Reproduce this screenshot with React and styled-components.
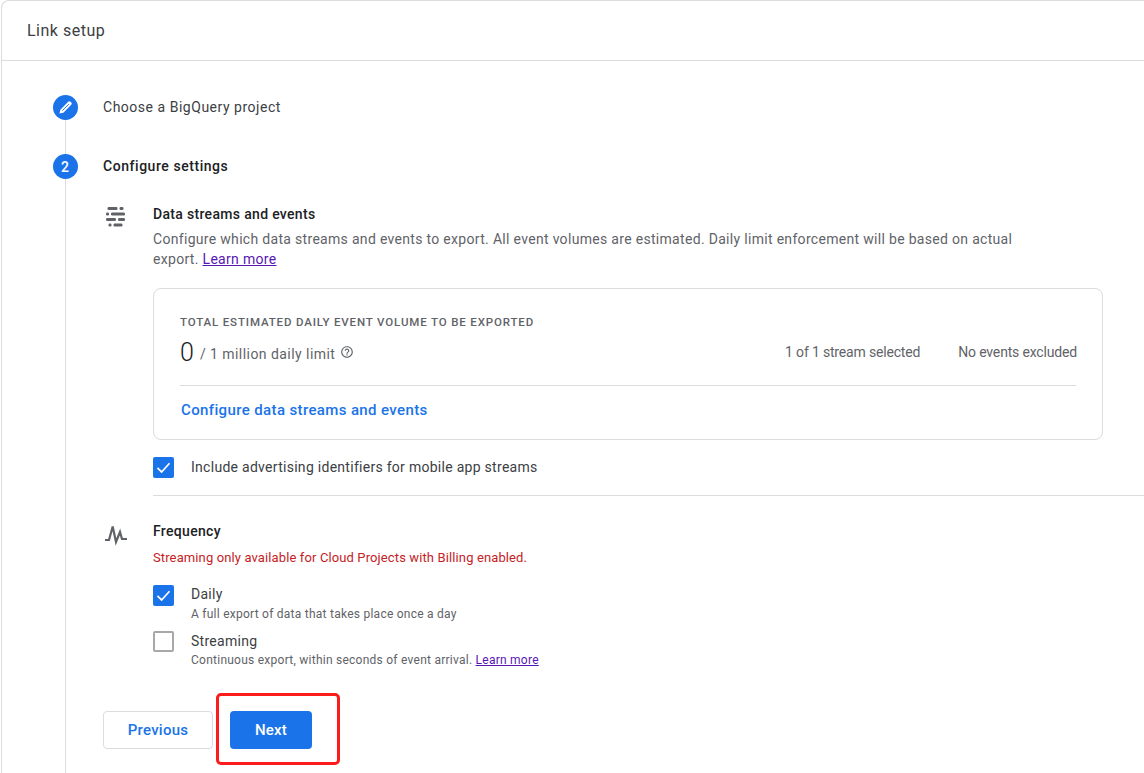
import React from "react";
import styled, { createGlobalStyle } from "styled-components";

const GlobalStyle = createGlobalStyle`
  html, body {
    margin: 0;
    padding: 0;
    background: #fff;
  }
  body {
    font-family: Roboto, "Liberation Sans", sans-serif;
    color: #202124;
  }
  * {
    box-sizing: border-box;
  }
`;

const Page = styled.div`
  position: relative;
  width: 1144px;
  height: 773px;
  overflow: hidden;
  background: #fff;
`;

const Panel = styled.div`
  height: 800px;
  margin-left: 1px;
  border: 1px solid #dadce0;
  border-right: 0;
  border-bottom: 0;
  border-top-left-radius: 8px;
`;

const Header = styled.div`
  height: 60px;
  padding-left: 25px;
  display: flex;
  align-items: center;
  border-bottom: 1px solid #dadce0;
  font-size: 16px;
  letter-spacing: 0.5px;
  color: #3c4043;
`;

const Body = styled.div`
  padding: 34px 0 0 51px;
`;

const Step = styled.div`
  display: flex;
  gap: 25px;
  height: ${(p) => p.$height}px;
`;

const Rail = styled.div`
  width: 25px;
  flex: none;
  display: flex;
  flex-direction: column;
  align-items: center;
`;

const Circle = styled.div`
  width: 25px;
  height: 25px;
  flex: none;
  padding-right: 1px;
  border-radius: 50%;
  background: #1a73e8;
  color: #fff;
  font-size: 14px;
  font-weight: 500;
  display: flex;
  align-items: center;
  justify-content: center;
`;

const Connector = styled.div`
  flex: 1;
  width: 1px;
  background: #dadce0;
`;

const StepBody = styled.div`
  flex: 1;
  min-width: 0;
`;

const StepTitle = styled.div`
  height: 25px;
  line-height: 24px;
  font-size: 14px;
  letter-spacing: ${(p) => (p.$active ? 0.55 : 0.52)}px;
  font-weight: ${(p) => (p.$active ? 500 : 400)};
  color: ${(p) => (p.$active ? "#202124" : "#3c4043")};
`;

const Section = styled.div`
  display: flex;
  margin-top: ${(p) => p.$top}px;
`;

const SectionIcon = styled.div`
  width: 50px;
  flex: none;
  padding: 2px 0 0 2px;
  color: #5f6368;
  svg {
    display: block;
  }
`;

const SectionMain = styled.div`
  flex: 1;
  min-width: 0;
`;

const SectionTitle = styled.div`
  font-size: 14px;
  line-height: 20px;
  font-weight: 500;
  letter-spacing: 0.32px;
`;

const Description = styled.div`
  margin-top: 5px;
`;

const DescriptionLine = styled.div`
  font-size: 14px;
  line-height: 20px;
  letter-spacing: 0.31px;
  color: #5f6368;
`;

const TextLink = styled.a`
  color: #5717b5;
  text-decoration: underline;
`;

const Card = styled.div`
  width: 950px;
  height: 152px;
  margin-top: 19px;
  padding: 24px 26px 0;
  border: 1px solid #dadce0;
  border-radius: 8px;
`;

const CardLabel = styled.div`
  font-size: 11.5px;
  line-height: 18px;
  font-weight: 500;
  letter-spacing: 0.85px;
  color: #5f6368;
`;

const VolumeRow = styled.div`
  height: 34px;
  margin: 4px -1px 0 0;
  display: flex;
  align-items: center;
  color: #5f6368;
  font-size: 14px;
  letter-spacing: 0.45px;
`;

const VolumeCount = styled.span`
  font-size: 25px;
  font-weight: 300;
  color: #202124;
  letter-spacing: 0;
  margin-right: 6px;
`;

const VolumeLimit = styled.span`
  margin-top: 3px;
  margin-right: 5px;
`;

const HelpIcon = styled.svg`
  width: 14px;
  height: 14px;
  fill: #5f6368;
  margin-top: -1px;
`;

const Stat = styled.span`
  font-size: 14px;
  letter-spacing: -0.17px;
  margin-left: ${(p) => p.$gap || 0}px;
`;

const Spacer = styled.div`
  flex: 1;
`;

const CardDivider = styled.div`
  height: 1px;
  margin-top: 16px;
  background: #dadce0;
`;

const ActionLink = styled.a`
  display: block;
  margin: 14px 0 0 1px;
  font-size: 15px;
  line-height: 20px;
  font-weight: 500;
  letter-spacing: 0.37px;
  color: #1a73e8;
`;

const CheckRow = styled.div`
  display: flex;
  gap: 17px;
  margin-top: ${(p) => p.$top}px;
`;

const Box = styled.div`
  width: 21px;
  height: 21px;
  flex: none;
  border-radius: 2px;
  display: flex;
  align-items: center;
  justify-content: center;
  background: ${(p) => (p.$checked ? "#1a73e8" : "#fff")};
  border: ${(p) => (p.$checked ? "0" : "2px solid #a8a8a8")};
`;

const CheckText = styled.div`
  margin-top: ${(p) => p.$lift || 0}px;
`;

const CheckLabel = styled.div`
  font-size: 14px;
  line-height: 20px;
  letter-spacing: 0.28px;
  color: #3c4043;
`;

const CheckHint = styled.div`
  font-size: 12px;
  line-height: 17px;
  margin-top: ${(p) => p.$gap}px;
  letter-spacing: 0.25px;
  color: #5f6368;
`;

const SectionDivider = styled.div`
  height: 1px;
  margin-top: 17px;
  background: #dadce0;
`;

const ErrorText = styled.div`
  margin-top: 7px;
  font-size: 13px;
  line-height: 20px;
  letter-spacing: 0.12px;
  color: #c5221f;
`;

const Actions = styled.div`
  display: flex;
  gap: 17px;
  margin-top: 42px;
`;

const Button = styled.button`
  height: 38px;
  width: ${(p) => p.$width}px;
  border-radius: 4px;
  font-family: inherit;
  font-size: 15px;
  font-weight: 500;
  letter-spacing: 0.25px;
  padding: 0;
  background: ${(p) => (p.$primary ? "#1a73e8" : "#fff")};
  color: ${(p) => (p.$primary ? "#fff" : "#1a73e8")};
  border: ${(p) => (p.$primary ? "0" : "1px solid #dadce0")};
`;

const Highlight = styled.div`
  position: absolute;
  left: 216px;
  top: 693px;
  width: 124px;
  height: 72px;
  border: 3px solid #fb1c1c;
  border-radius: 5px;
  pointer-events: none;
`;

const Check = () => (
  <svg width="17" height="17" viewBox="0 0 24 24" fill="none" stroke="#fff" strokeWidth="2.4">
    <path d="M3.5 12.5l5.8 5.8L20.5 6" />
  </svg>
);

const PencilIcon = () => (
  <svg width="17" height="17" viewBox="0 0 24 24">
    <path fill="#fff" d="M3.5 20.5l1.2-5.5L15.8 3.9a2.4 2.4 0 0 1 3.4 0l.9.9a2.4 2.4 0 0 1 0 3.4L9 19.3z" />
    <path stroke="#1a73e8" strokeWidth="1.3" fill="none" d="M7.5 16.5L16.8 7.2" />
  </svg>
);

const StreamsIcon = () => (
  <svg width="22" height="22" viewBox="0 0 22 22" fill="currentColor">
    <rect x="2.5" y="1" width="10" height="3" rx="1.2" />
    <rect x="14.5" y="1" width="4" height="3" rx="1.2" />
    <rect x="1" y="6.5" width="3" height="3" rx="1.2" />
    <rect x="6" y="6.5" width="14" height="3" rx="1.2" />
    <rect x="1" y="12" width="10" height="3" rx="1.2" />
    <rect x="13" y="12" width="7" height="3" rx="1.2" />
    <rect x="3.5" y="17.5" width="3" height="3" rx="1.2" />
    <rect x="8.5" y="17.5" width="9" height="3" rx="1.2" />
  </svg>
);

const PulseIcon = () => (
  <svg width="24" height="24" viewBox="0 0 24 24" fill="none" stroke="currentColor" strokeWidth="2.2">
    <path d="M0 17h4L7.7 3.5 11 19l4-10 2 7h5" />
  </svg>
);

export default function App() {
  return (
    <Page>
      <GlobalStyle />
      <Panel>
        <Header>Link setup</Header>
        <Body>
          <Step $height={59}>
            <Rail>
              <Circle>
                <PencilIcon />
              </Circle>
              <Connector />
            </Rail>
            <StepBody>
              <StepTitle>Choose a BigQuery project</StepTitle>
            </StepBody>
          </Step>
          <Step $height={700}>
            <Rail>
              <Circle>2</Circle>
              <Connector />
            </Rail>
            <StepBody>
              <StepTitle $active>Configure settings</StepTitle>
              <Section $top={25}>
                <SectionIcon>
                  <StreamsIcon />
                </SectionIcon>
                <SectionMain>
                  <SectionTitle>Data streams and events</SectionTitle>
                  <Description>
                    <DescriptionLine>
                      Configure which data streams and events to export. All event volumes are estimated. Daily limit
                      enforcement will be based on actual
                    </DescriptionLine>
                    <DescriptionLine>
                      export. <TextLink>Learn more</TextLink>
                    </DescriptionLine>
                  </Description>
                  <Card>
                    <CardLabel>TOTAL ESTIMATED DAILY EVENT VOLUME TO BE EXPORTED</CardLabel>
                    <VolumeRow>
                      <VolumeCount>0</VolumeCount>
                      <VolumeLimit>/ 1 million daily limit</VolumeLimit>
                      <HelpIcon viewBox="0 0 24 24">
                        <path d="M11 18h2v-2h-2v2zm1-16C6.48 2 2 6.48 2 12s4.48 10 10 10 10-4.48 10-10S17.52 2 12 2zm0 18c-4.41 0-8-3.59-8-8s3.59-8 8-8 8 3.59 8 8-3.59 8-8 8zm0-14c-2.21 0-4 1.79-4 4h2c0-1.1.9-2 2-2s2 .9 2 2c0 2-3 1.75-3 5h2c0-2.25 3-2.5 3-5 0-2.21-1.79-4-4-4z" />
                      </HelpIcon>
                      <Spacer />
                      <Stat>1 of 1 stream selected</Stat>
                      <Stat $gap={38}>No events excluded</Stat>
                    </VolumeRow>
                    <CardDivider />
                    <ActionLink>Configure data streams and events</ActionLink>
                  </Card>
                  <CheckRow $top={17}>
                    <Box $checked>
                      <Check />
                    </Box>
                    <CheckLabel>Include advertising identifiers for mobile app streams</CheckLabel>
                  </CheckRow>
                  <SectionDivider />
                </SectionMain>
              </Section>
              <Section $top={25}>
                <SectionIcon>
                  <PulseIcon />
                </SectionIcon>
                <SectionMain>
                  <SectionTitle>Frequency</SectionTitle>
                  <ErrorText>Streaming only available for Cloud Projects with Billing enabled.</ErrorText>
                  <CheckRow $top={17}>
                    <Box $checked>
                      <Check />
                    </Box>
                    <CheckText $lift={-1}>
                      <CheckLabel>Daily</CheckLabel>
                      <CheckHint $gap={2}>A full export of data that takes place once a day</CheckHint>
                    </CheckText>
                  </CheckRow>
                  <CheckRow $top={8}>
                    <Box />
                    <CheckText>
                      <CheckLabel>Streaming</CheckLabel>
                      <CheckHint $gap={1}>
                        Continuous export, within seconds of event arrival. <TextLink>Learn more</TextLink>
                      </CheckHint>
                    </CheckText>
                  </CheckRow>
                </SectionMain>
              </Section>
              <Actions>
                <Button $width={110}>Previous</Button>
                <Button $width={82} $primary>
                  Next
                </Button>
              </Actions>
            </StepBody>
          </Step>
        </Body>
      </Panel>
      <Highlight />
    </Page>
  );
}
